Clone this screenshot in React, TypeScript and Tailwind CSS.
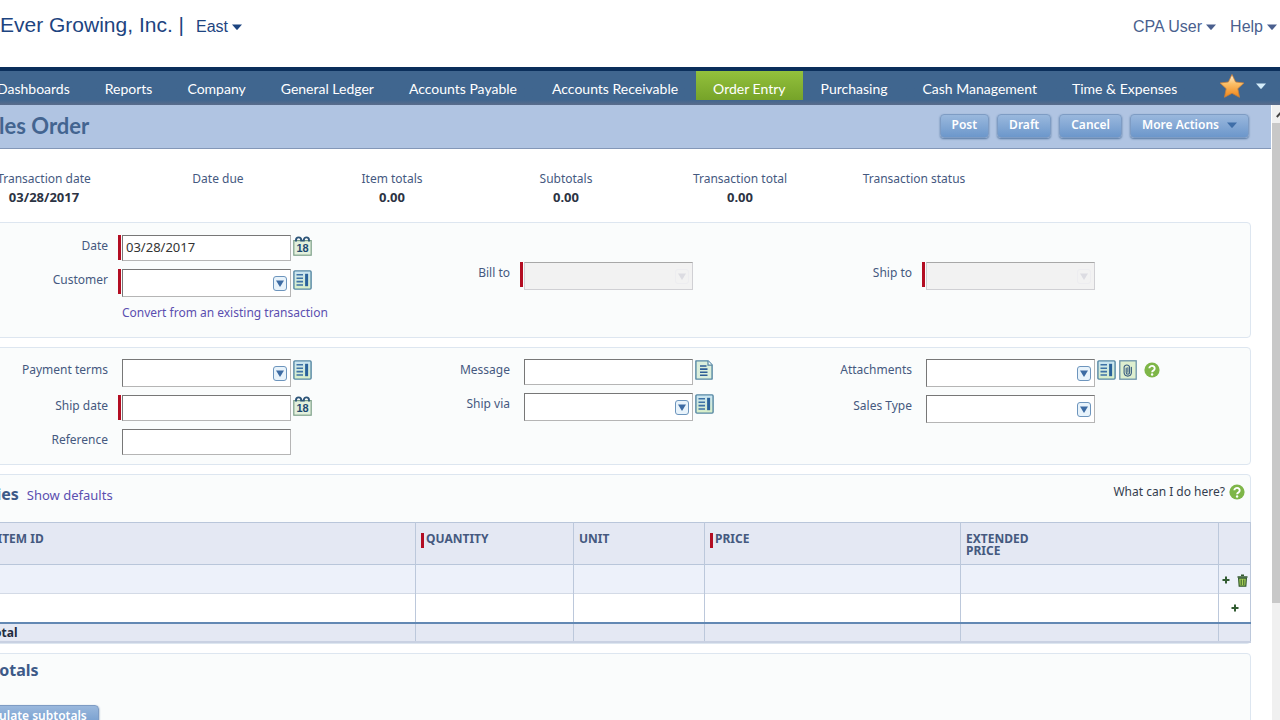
import React, { FC, ReactNode } from 'react';

type NavItem = { title: string; active?: boolean };

const navItems: NavItem[] = [
  { title: 'Dashboards' },
  { title: 'Reports' },
  { title: 'Company' },
  { title: 'General Ledger' },
  { title: 'Accounts Payable' },
  { title: 'Accounts Receivable' },
  { title: 'Order Entry', active: true },
  { title: 'Purchasing' },
  { title: 'Cash Management' },
  { title: 'Time & Expenses' },
];

const summary = [
  { label: 'Transaction date', value: '03/28/2017' },
  { label: 'Date due', value: '' },
  { label: 'Item totals', value: '0.00' },
  { label: 'Subtotals', value: '0.00' },
  { label: 'Transaction total', value: '0.00' },
  { label: 'Transaction status', value: '' },
];

const Caret: FC<{ className?: string }> = ({ className }) => (
  <svg viewBox="0 0 10 6" className={`h-[6px] w-[10px] ${className ?? ''}`} aria-hidden="true">
    <path d="M0 0.5h10L5.6 5.6a0.8 0.8 0 0 1-1.2 0z" fill="currentColor" />
  </svg>
);

const StarIcon = () => (
  <svg viewBox="0 0 26 26" className="h-[26px] w-[26px]" aria-hidden="true">
    <defs>
      <linearGradient id="star" x1="0" y1="0" x2="0" y2="1">
        <stop offset="0" stopColor="#fff3dc" />
        <stop offset="0.4" stopColor="#fbc069" />
        <stop offset="1" stopColor="#ef8418" />
      </linearGradient>
    </defs>
    <path
      d="M13 1.5l3.6 7.5 8.3 1-6.100 5.700 1.700 8.600L13 20.300l-7.500 4 1.700-8.600L1.100 10l8.300-1z"
      fill="url(#star)"
      stroke="#c9803a"
      strokeWidth="0.8"
      strokeLinejoin="round"
    />
  </svg>
);

const CalendarIcon = () => (
  <svg viewBox="0 0 19 20" className="h-5 w-[19px]" aria-hidden="true">
    <rect x="0.8" y="4.6" width="17.4" height="14.6" fill="#e3f0dc" stroke="#7da08a" strokeWidth="1.2" />
    <path
      d="M3 5.500V4a2.600 2.600 0 0 1 5.200 0v1.500M10.800 5.500V4a2.600 2.600 0 0 1 5.200 0v1.500M8.200 4.600h2.600"
      fill="none"
      stroke="#2d5579"
      strokeWidth="1.900"
    />
    <text x="9.6" y="16.4" textAnchor="middle" fontFamily="Liberation Sans, sans-serif" fontWeight="700" fontSize="11" fill="#1d4a73">
      18
    </text>
  </svg>
);

const ListIcon = () => (
  <svg viewBox="0 0 19 20" className="h-5 w-[19px]" aria-hidden="true">
    <defs>
      <linearGradient id="list" x1="0" y1="0" x2="0" y2="1">
        <stop offset="0" stopColor="#c8e4f4" />
        <stop offset="1" stopColor="#d9efc6" />
      </linearGradient>
    </defs>
    <rect x="0.9" y="0.9" width="17.2" height="18.2" rx="1" fill="url(#list)" stroke="#5587a3" strokeWidth="1.4" />
    <path d="M3.5 4.8h6.5M3.5 8.2h6.5M3.5 11.6h6.5M3.5 15h6.5" stroke="#3d72a6" strokeWidth="1.6" />
    <path d="M13.6 3.8v12.4" stroke="#2a629a" strokeWidth="3" />
  </svg>
);

const NoteIcon = () => (
  <svg viewBox="0 0 18 20" className="h-5 w-[18px]" aria-hidden="true">
    <path d="M0.9 0.9h12.3l3.9 4v14.2H0.9z" fill="#dcefdc" stroke="#5587a3" strokeWidth="1.4" strokeLinejoin="round" />
    <path d="M13 1v4.2h4.2" fill="#fff" stroke="#5587a3" strokeWidth="1.2" />
    <path d="M5 6h6.5M5 9.1h7.5M5 12.2h7.5M5 15.3h7.5" stroke="#2f5f96" strokeWidth="1.6" />
  </svg>
);

const ClipIcon = () => (
  <svg viewBox="0 0 18 20" className="h-5 w-[18px]" aria-hidden="true">
    <rect x="0.8" y="0.8" width="16.4" height="18.4" fill="#deefcf" stroke="#6c94a8" strokeWidth="1.3" />
    <path
      d="M7.2 8v4.6a1.7 1.7 0 0 0 3.4 0V7.2a2.8 2.8 0 0 0-5.5 0V13a3.7 3.7 0 0 0 7.3 0V7.2M8.9 7.6v4.6"
      fill="none"
      stroke="#3c5f82"
      strokeWidth="1.1"
      strokeLinecap="round"
    />
  </svg>
);

const HelpIcon = () => (
  <svg viewBox="0 0 16 16" className="h-4 w-4" aria-hidden="true">
    <circle cx="8" cy="8" r="7.6" fill="#7eb648" />
    <path d="M5.3 6.3a2.7 2.5 0 1 1 4.3 2.1C8.6 9 8.1 9.3 8.1 10.3" fill="none" stroke="#fff" strokeWidth="1.9" />
    <circle cx="8.1" cy="12.5" r="1.2" fill="#fff" />
  </svg>
);

const TrashIcon = () => (
  <svg viewBox="0 0 11 13" className="h-[13px] w-[11px]" aria-hidden="true">
    <path d="M4 1.2h3M0.5 3h10" stroke="#33592f" strokeWidth="1.6" />
    <path d="M1.6 4.2h7.8l-.6 8H2.2z" fill="#a9d155" stroke="#33592f" strokeWidth="1.2" />
    <path d="M4.2 5.5v5.5M6.8 5.5v5.5" stroke="#33592f" strokeWidth="1" />
  </svg>
);

const PlusIcon = () => (
  <svg viewBox="0 0 8 8" className="h-2 w-2" aria-hidden="true">
    <path d="M4 0.5v7M0.5 4h7" stroke="#335c33" strokeWidth="2" />
  </svg>
);

type FieldProps = {
  id: string;
  label: string;
  type?: 'text' | 'select';
  value?: string;
  required?: boolean;
  disabled?: boolean;
  children?: ReactNode;
};

const Field: FC<FieldProps> = ({ id, label, type = 'text', value = '', required, disabled, children }) => {
  const border = disabled
    ? 'border-[#d0d0d4] border-t-[#a8a8a8] bg-[#f2f2f2]'
    : 'border-[#b5b5b5] border-t-[#777] border-l-[#777] bg-white';

  return (
    <div className="flex items-start">
      <label htmlFor={id} className="w-[157px] shrink-0 pt-px text-right leading-5 text-[#45597f]">
        {label}
      </label>
      <span className={`mr-px ml-[10px] h-[25px] w-[3px] shrink-0 ${required ? 'bg-[#b30d22]' : ''}`} />
      {type === 'select' ? (
        <div className="relative w-[169px] shrink-0">
          <select
            id={id}
            disabled={disabled}
            className={`block h-7 w-full appearance-none border px-1 outline-none ${border}`}
          >
            <option value=""></option>
          </select>
          <span
            className={`pointer-events-none absolute top-[7px] right-1 flex h-[15px] w-[14px] items-center justify-center rounded-[3px] border ${
              disabled ? 'border-[#ededf0] text-[#dcdce2]' : 'border-[#6d95bd] bg-[#e8f3fb] text-[#3c6ba3]'
            }`}
          >
            <svg viewBox="0 0 8 7" className="h-[7px] w-2" aria-hidden="true">
              <path d="M0 0.5h8L4 7z" fill="currentColor" />
            </svg>
          </span>
        </div>
      ) : (
        <input
          id={id}
          type="text"
          defaultValue={value}
          className={`h-[26px] w-[169px] shrink-0 border px-[3px] pb-[3px] text-[13px] text-[#333] outline-none ${border}`}
        />
      )}
      <div className="flex items-center gap-[3px] pt-px pl-[2px]">{children}</div>
    </div>
  );
};

const IconButton: FC<{ label: string; children: ReactNode }> = ({ label, children }) => (
  <button type="button" aria-label={label} className="block cursor-pointer">
    {children}
  </button>
);

const ActionButton: FC<{ children: ReactNode }> = ({ children }) => (
  <button
    type="button"
    className="flex h-6 cursor-pointer items-center gap-2 rounded-[4px] border border-[#7e9cc4] bg-linear-to-b from-[#9ab8dd] to-[#6c97cb] px-[11px] pb-px text-[12px] font-semibold whitespace-nowrap text-white shadow-[0_1px_2px_#5577a0]"
  >
    {children}
  </button>
);

const Panel: FC<{ className?: string; children: ReactNode }> = ({ className, children }) => (
  <section className={`rounded-[4px] border border-[#dde6f0] bg-[#fafcfc] ${className ?? ''}`}>{children}</section>
);

const HeadCell: FC<{ required?: boolean; children?: ReactNode }> = ({ required, children }) => (
  <th className="border-r border-[#bcc8db] px-[5px] pt-[10px] text-left align-top font-bold">
    <div className="flex items-start">
      {required && <span className="mr-[2px] h-[15px] w-[3px] bg-[#b30d22]" />}
      <span className="w-[80px] text-[12px] leading-3">{children}</span>
    </div>
  </th>
);

const cell = 'border-r border-[#bcc8db]';

const EntriesTable = () => (
  <table className="w-full table-fixed border-collapse text-[#45597f]">
    <colgroup>
      <col className="w-[42px]" />
      <col />
      <col className="w-[158px]" />
      <col className="w-[131px]" />
      <col className="w-[256px]" />
      <col className="w-[258px]" />
      <col className="w-8" />
    </colgroup>
    <thead>
      <tr className="h-[42px] border-y border-[#b9c6da] bg-[#e4e8f3]">
        <HeadCell />
        <HeadCell>ITEM ID</HeadCell>
        <HeadCell required>QUANTITY</HeadCell>
        <HeadCell>UNIT</HeadCell>
        <HeadCell required>PRICE</HeadCell>
        <HeadCell>EXTENDED PRICE</HeadCell>
        <HeadCell />
      </tr>
    </thead>
    <tbody>
      <tr className="h-[29px] border-b border-[#d3dae6] bg-[#edf1fa]">
        {[0, 1, 2, 3, 4, 5].map((i) => (
          <td key={i} className={cell}></td>
        ))}
        <td className={cell}>
          <div className="flex items-center justify-center gap-[7px] pt-[2px]">
            <IconButton label="Add row">
              <PlusIcon />
            </IconButton>
            <IconButton label="Delete row">
              <TrashIcon />
            </IconButton>
          </div>
        </td>
      </tr>
      <tr className="h-[29px] border-b-2 border-[#6288b3] bg-white">
        {[0, 1, 2, 3, 4, 5].map((i) => (
          <td key={i} className={cell}></td>
        ))}
        <td className={cell}>
          <div className="flex justify-center">
            <IconButton label="Add row">
              <PlusIcon />
            </IconButton>
          </div>
        </td>
      </tr>
    </tbody>
    <tfoot>
      <tr className="h-[19px] border-b-2 border-[#c9d1e2] bg-[#e4e8f3]">
        <td colSpan={2} className={`${cell} pt-px pl-[38px] text-[12px] leading-4 font-bold text-[#222b3d]`}>
          Total
        </td>
        {[0, 1, 2, 3, 4].map((i) => (
          <td key={i} className={cell}></td>
        ))}
      </tr>
    </tfoot>
  </table>
);

const TopBar = () => (
  <header className="flex h-[67px] shrink-0 items-start justify-between bg-white pt-[10px] pr-[3px] font-['Liberation_Sans',Arial,sans-serif] text-[16px] leading-8">
    <div className="flex items-start text-[#1d4480]">
      <h1 className="text-[21px] leading-[30px]">Ever Growing, Inc. |</h1>
      <button type="button" className="ml-3 flex cursor-pointer items-center gap-1 pt-px">
        East <Caret />
      </button>
    </div>
    <div className="flex gap-[14px] pt-px text-[#4a5f8e]">
      <button type="button" className="flex cursor-pointer items-center gap-1">
        CPA User <Caret />
      </button>
      <button type="button" className="flex cursor-pointer items-center gap-1">
        Help <Caret />
      </button>
    </div>
  </header>
);

const MainNav = () => (
  <nav className="flex h-[38px] shrink-0 items-start justify-between border-t-4 border-[#0b2f5b] bg-linear-to-b from-[#40668f] from-85% to-[#5a6c8b] pr-[14px]">
    <ul className="-ml-5 flex gap-px font-[Lato,Carlito,sans-serif] text-[14px]">
      {navItems.map((item) => (
        <li key={item.title}>
          <a
            href="#"
            className={`flex h-[29px] items-center px-[17px] pt-[6px] whitespace-nowrap text-white ${
              item.active ? 'bg-linear-to-b from-[#93c13c] to-[#76a329]' : ''
            }`}
          >
            {item.title}
          </a>
        </li>
      ))}
    </ul>
    <button type="button" aria-label="Favorites" className="flex cursor-pointer items-center gap-[11px] pt-[2px] text-[#d5edfa]">
      <StarIcon />
      <Caret />
    </button>
  </nav>
);

const ScrollRail = () => (
  <div className="w-[9px] shrink-0 overflow-hidden border-l border-white bg-[#f0f0f0]" aria-hidden="true">
    <div className="flex h-[18px] w-[17px] items-center justify-center">
      <svg viewBox="0 0 10 7" className="h-[7px] w-[10px]">
        <path d="M0.8 6L5 1.5 9.2 6" fill="none" stroke="#444" strokeWidth="2" />
      </svg>
    </div>
    <div className="h-[78%] w-[17px] bg-[#c8c8c8]" />
  </div>
);

const App: FC = () => (
  <div className="flex h-screen flex-col overflow-hidden bg-white font-['Noto_Sans','Open_Sans',sans-serif] text-[12px]">
    <TopBar />
    <MainNav />
    <div className="flex min-h-0 flex-1">
      <main className="min-w-0 flex-1 overflow-hidden">
        {/* the sheet is scrolled sideways, so its left edge is out of view */}
        <div className="-ml-[50px]">
          <div className="flex h-[44px] items-center justify-between border-b border-[#8397b8] bg-[#b0c4e2] pr-[22px] pb-[2px] pl-[26px]">
            <h2 className="font-[Lato,Carlito,sans-serif] text-[22px] font-bold text-[#436490]">Sales Order</h2>
            <div className="flex gap-2">
              <ActionButton>Post</ActionButton>
              <ActionButton>Draft</ActionButton>
              <ActionButton>Cancel</ActionButton>
              <ActionButton>
                More Actions <Caret className="text-[#3f6ea8]" />
              </ActionButton>
            </div>
          </div>

          <div className="pr-5">
            <dl className="flex h-[73px] pt-[21px] pl-[7px] text-center leading-[18px]">
              {summary.map((item) => (
                <div key={item.label} className="w-[174px]">
                  <dt className="text-[#45597f]">{item.label}</dt>
                  <dd className="text-[13px] font-bold text-[#2c3343]">{item.value}</dd>
                </div>
              ))}
            </dl>

            <div className="flex flex-col gap-[9px]">
              <Panel className="grid grid-cols-3 pt-3 pr-[93px] pb-[14px]">
                <div className="flex flex-col gap-2">
                  <Field id="date" label="Date" value="03/28/2017" required>
                    <IconButton label="Pick date">
                      <CalendarIcon />
                    </IconButton>
                  </Field>
                  <Field id="customer" label="Customer" type="select" required>
                    <IconButton label="List customers">
                      <ListIcon />
                    </IconButton>
                  </Field>
                  <a href="#" className="-mt-[2px] ml-[171px] leading-5 whitespace-nowrap text-[#5a4fb0]">
                    Convert from an existing transaction
                  </a>
                </div>
                <div className="pt-[27px]">
                  <Field id="bill-to" label="Bill to" type="select" required disabled />
                </div>
                <div className="pt-[27px]">
                  <Field id="ship-to" label="Ship to" type="select" required disabled />
                </div>
              </Panel>

              <Panel className="grid grid-cols-3 pt-[11px] pr-[93px] pb-[9px]">
                <div className="flex flex-col gap-2">
                  <Field id="terms" label="Payment terms" type="select">
                    <IconButton label="List payment terms">
                      <ListIcon />
                    </IconButton>
                  </Field>
                  <Field id="ship-date" label="Ship date" required>
                    <IconButton label="Pick ship date">
                      <CalendarIcon />
                    </IconButton>
                  </Field>
                  <Field id="reference" label="Reference" />
                </div>
                <div className="flex flex-col gap-2">
                  <Field id="message" label="Message">
                    <IconButton label="Open message">
                      <NoteIcon />
                    </IconButton>
                  </Field>
                  <Field id="ship-via" label="Ship via" type="select">
                    <IconButton label="List shipping methods">
                      <ListIcon />
                    </IconButton>
                  </Field>
                </div>
                <div className="flex flex-col gap-2">
                  <Field id="attachments" label="Attachments" type="select">
                    <IconButton label="List attachments">
                      <ListIcon />
                    </IconButton>
                    <IconButton label="Attach file">
                      <ClipIcon />
                    </IconButton>
                    <span className="pl-1">
                      <IconButton label="Help on attachments">
                        <HelpIcon />
                      </IconButton>
                    </span>
                  </Field>
                  <Field id="sales-type" label="Sales Type" type="select" />
                </div>
              </Panel>

              <Panel>
                <div className="flex h-[47px] items-start justify-between pt-[7px] pr-[5px] pl-3">
                  <div className="flex items-baseline gap-2">
                    <h3 className="text-[16px] leading-6 font-bold text-[#3d5a88]">Entries</h3>
                    <a href="#" className="text-[13px] text-[#5a4fb0]">
                      Show defaults
                    </a>
                  </div>
                  <a href="#" className="flex items-center gap-1 leading-5 text-[#343c4e]">
                    What can I do here? <HelpIcon />
                  </a>
                </div>
                <div className="-mx-px">
                  <EntriesTable />
                </div>
              </Panel>

              <Panel className="pt-1 pb-10 pl-3">
                <h3 className="text-[16px] leading-6 font-bold text-[#3d5a88]">Subtotals</h3>
                <div className="mt-[23px] flex">
                  <ActionButton>Calculate subtotals</ActionButton>
                </div>
              </Panel>
            </div>
          </div>
        </div>
      </main>
      <ScrollRail />
    </div>
  </div>
);

export default App;
